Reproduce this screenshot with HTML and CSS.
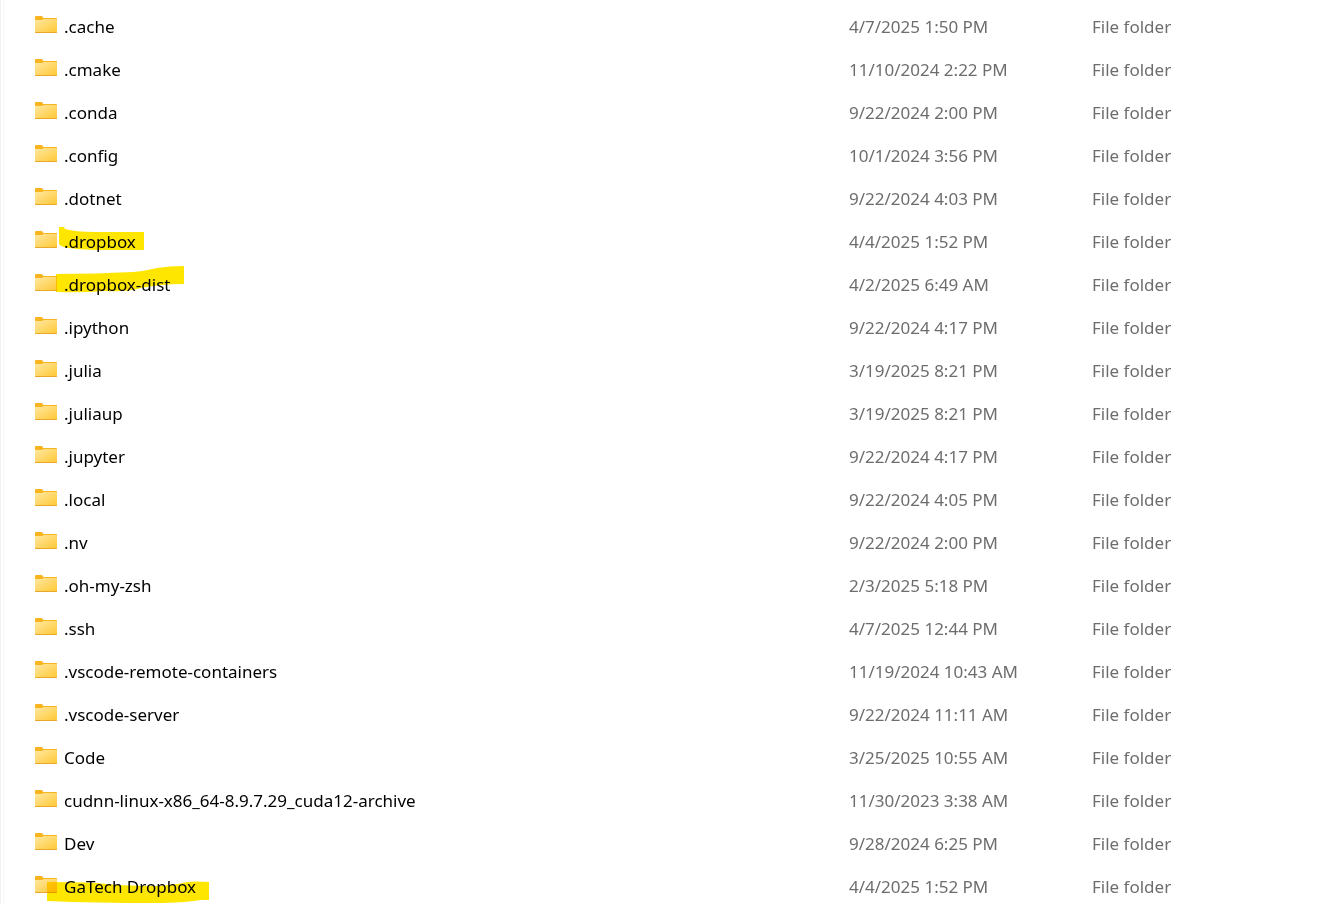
FILE: index.html
```html
<!DOCTYPE html>
<html lang="en">
<head>
<meta charset="utf-8">
<title>Files</title>
<link rel="stylesheet" href="styles.css">
</head>
<body>
<svg class="defs" aria-hidden="true">
  <defs>
    <linearGradient id="face" x1="0" y1="0" x2="1" y2="1">
      <stop offset="0" stop-color="#ffe8a2"/>
      <stop offset="1" stop-color="#ffc937"/>
    </linearGradient>
    <symbol id="folder" viewBox="0 0 22 17">
      <path d="M0 1Q0 0 1 0H6.500Q7.300 0 7.800 1L8.300 2H21.500Q22 2 22 2.500V8H0Z" fill="#f8b51f"/>
      <path d="M0 4H7.200L8.600 3H22V16H0Z" fill="url(#face)"/>
      <path d="M0 16H22V16.500Q22 17 21.500 17H.5Q0 17 0 16.500Z" fill="#e9a82c"/>
    </symbol>
  </defs>
</svg>
<main class="pane">
  <table class="files" aria-label="Files">
    <colgroup><col><col class="col-date"><col class="col-type"></colgroup>
    <tbody id="rows"></tbody>
  </table>
</main>
<script src="files.js"></script>
</body>
</html>
```
FILE: styles.css
```css
* {
  box-sizing: border-box;
}

body {
  margin: 0;
  height: 100vh;
  overflow: hidden;
  background: #fff;
  color: #000;
  font: 17px/24px "Segoe UI", "Noto Sans", "Open Sans", sans-serif;
}

.defs {
  position: absolute;
  width: 0;
  height: 0;
}

.pane {
  min-height: 100vh;
  margin-left: 3px;
  padding-top: 5px;
  border-left: 2px solid #f9f9f9;
  box-shadow: -2px 0 #fff, -3px 0 #f0f0f0;
}

.files {
  width: 100%;
  table-layout: fixed;
  border-collapse: collapse;
}

.col-date {
  width: 243px;
}

.col-type {
  width: 244px;
}

.files td {
  height: 43px;
  padding: 0;
  color: #6d6d6d;
  white-space: nowrap;
}

.files .name {
  position: relative;
  padding-left: 30px;
  color: #000;
}

.label {
  display: flex;
  align-items: center;
  gap: 7px;
}

.icon {
  width: 22px;
  height: 17px;
  margin-bottom: 4px;
}

.marker {
  position: absolute;
  top: 0;
  left: 30px;
  width: 200px;
  height: 43px;
  fill: #ffe600;
  mix-blend-mode: multiply;
  pointer-events: none;
}
```
FILE: files.js
```js
const files = [
  [".cache", "4/7/2025 1:50 PM"],
  [".cmake", "11/10/2024 2:22 PM"],
  [".conda", "9/22/2024 2:00 PM"],
  [".config", "10/1/2024 3:56 PM"],
  [".dotnet", "9/22/2024 4:03 PM"],
  [".dropbox", "4/4/2025 1:52 PM", "M24 7H29L30 9Q40 12 60 12H109V30H72Q48 30 34 28Q26 27 24 24Z"],
  [".dropbox-dist", "4/2/2025 6:49 AM", "M21 11Q60 11 98 9Q110 8 122 5Q134 3 149 3V21Q125 21 106 25Q92 29 70 28Q46 30 21 29Z"],
  [".ipython", "9/22/2024 4:17 PM"],
  [".julia", "3/19/2025 8:21 PM"],
  [".juliaup", "3/19/2025 8:21 PM"],
  [".jupyter", "9/22/2024 4:17 PM"],
  [".local", "9/22/2024 4:05 PM"],
  [".nv", "9/22/2024 2:00 PM"],
  [".oh-my-zsh", "2/3/2025 5:18 PM"],
  [".ssh", "4/7/2025 12:44 PM"],
  [".vscode-remote-containers", "11/19/2024 10:43 AM"],
  [".vscode-server", "9/22/2024 11:11 AM"],
  ["Code", "3/25/2025 10:55 AM"],
  ["cudnn-linux-x86_64-8.9.7.29_cuda12-archive", "11/30/2023 3:38 AM"],
  ["Dev", "9/28/2024 6:25 PM"],
  ["GaTech Dropbox", "4/4/2025 1:52 PM", "M12 17Q40 17 62 18Q85 21 120 21Q140 20 152 17Q162 16 174 17V35H165Q150 38 120 38Q60 38 12 36Z"]
];

document.getElementById("rows").innerHTML = files.map(([name, date, mark]) => `
  <tr>
    <td class="name">
      <span class="label"><svg class="icon" aria-hidden="true"><use href="#folder"/></svg>${name}</span>
      ${mark ? `<svg class="marker" viewBox="0 0 200 43" aria-hidden="true"><path d="${mark}"/></svg>` : ""}
    </td>
    <td>${date}</td>
    <td>File folder</td>
  </tr>`).join("");
```
